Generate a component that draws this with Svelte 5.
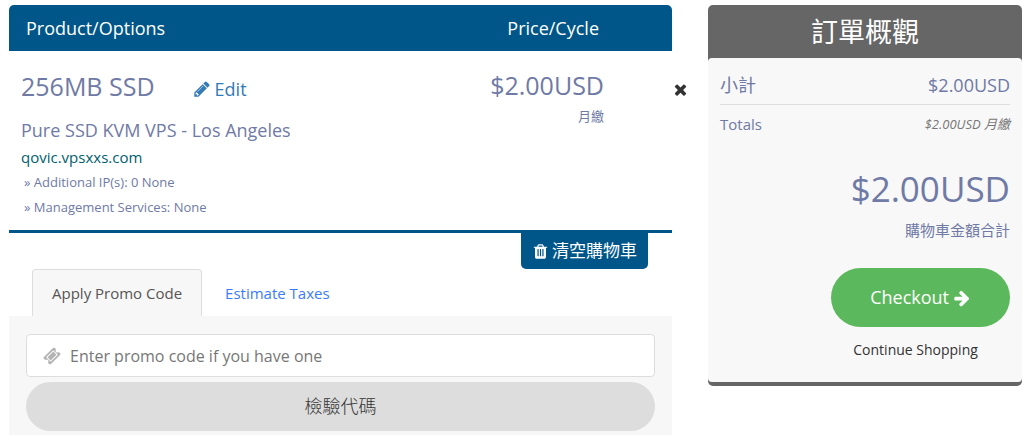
<script>
  const icons = {
    pencil: 'M491 1536l91-91-235-235-91 91v107h128v128h107zm523-928q0-22-22-22-10 0-17 7l-542 542q-7 7-7 17 0 22 22 22 10 0 17-7l542-542q7-7 7-17zm-54-192l416 416-832 832h-416v-416zm683 96q0 53-37 90l-166 166-416-416 166-165q36-38 90-38 53 0 91 38l235 234q37 39 37 91z',
    times: 'M1490 1322q0 40-28 68l-136 136q-28 28-68 28t-68-28l-294-294-294 294q-28 28-68 28t-68-28l-136-136q-28-28-28-68t28-68l294-294-294-294q-28-28-28-68t28-68l136-136q28-28 68-28t68 28l294 294 294-294q28-28 68-28t68 28l136 136q28 28 28 68t-28 68l-294 294 294 294q28 28 28 68z',
    trash: 'M704 1376v-704q0-14-9-23t-23-9h-64q-14 0-23 9t-9 23v704q0 14 9 23t23 9h64q14 0 23-9t9-23zm256 0v-704q0-14-9-23t-23-9h-64q-14 0-23 9t-9 23v704q0 14 9 23t23 9h64q14 0 23-9t9-23zm256 0v-704q0-14-9-23t-23-9h-64q-14 0-23 9t-9 23v704q0 14 9 23t23 9h64q14 0 23-9t9-23zm-544-992h448l-48-117q-7-9-17-11h-317q-10 2-17 11zm928 32v64q0 14-9 23t-23 9h-96v948q0 83-47 143.500t-113 60.500h-832q-66 0-113-58.500t-47-141.500v-952h-96q-14 0-23-9t-9-23v-64q0-14 9-23t23-9h309l70-167q15-37 54-63t79-26h320q40 0 79 26t54 63l70 167h309q14 0 23 9t9 23z',
    arrow: 'M1600 960q0 54-37 91l-651 651q-39 37-91 37-51 0-90-37l-75-75q-38-38-38-91t38-91l293-293h-704q-52 0-84.500-37.500t-32.500-90.500v-128q0-53 32.500-90.500t84.500-37.500h704l-293-294q-38-36-38-90t38-90l75-75q38-38 90-38 53 0 91 38l651 651q37 35 37 90z',
    ticket: 'M1024 452l316 316-572 572-316-316zm-211 979l618-618q19-19 19-45t-19-45l-362-362q-18-18-45-18t-45 18l-618 618q-19 19-19 45t19 45l362 362q18 18 45 18t45-18zm889-637l-907 908q-37 37-90.500 37t-90.500-37l-126-126q56-56 56-136t-56-136-136-56-136 56l-125-126q-37-37-37-90.500t37-90.500l907-906q37-37 90.500-37t90.500 37l125 125q-56 56-56 136t56 136 136 56 136-56l126 125q37 37 37 90.500t-37 90.500z'
  };
  let promo = $state('');
</script>

{#snippet icon(name)}
  <svg class="icon" viewBox="0 0 1792 1792" aria-hidden="true"><path d={icons[name]} /></svg>
{/snippet}

<div class="page">
  <main class="cart">
    <div class="head">
      <span>Product/Options</span>
      <span class="head-price">Price/Cycle</span>
    </div>
    <section class="item">
      <div class="product">
        <div class="title">
          <h2>256MB SSD</h2>
          <a class="edit" href="#edit">{@render icon('pencil')}Edit</a>
        </div>
        <p class="group">Pure SSD KVM VPS - Los Angeles</p>
        <p class="domain">qovic.vpsxxs.com</p>
        <p class="option">» Additional IP(s): 0 None</p>
        <p class="option">» Management Services: None</p>
      </div>
      <div class="price">
        <span class="amount">$2.00USD</span>
        <span class="cycle">月繳</span>
      </div>
    </section>
    <div class="empty-row">
      <button class="empty" type="button">{@render icon('trash')}清空購物車</button>
    </div>
    <div class="tabs" role="tablist">
      <button class="tab active" type="button" role="tab" aria-selected="true">Apply Promo Code</button>
      <button class="tab" type="button" role="tab" aria-selected="false">Estimate Taxes</button>
    </div>
    <form class="promo">
      <label class="field">
        {@render icon('ticket')}
        <input type="text" placeholder="Enter promo code if you have one" bind:value={promo} />
      </label>
      <button class="validate" type="button">檢驗代碼</button>
    </form>
  </main>

  <button class="remove" type="button" aria-label="✖">{@render icon('times')}</button>

  <aside class="summary">
    <h1>訂單概觀</h1>
    <div class="body">
      <div class="line subtotal"><span>小計</span><span>$2.00USD</span></div>
      <div class="line totals"><span>Totals</span><em>$2.00USD 月繳</em></div>
      <div class="due">$2.00USD</div>
      <div class="due-label">購物車金額合計</div>
      <div class="actions">
        <button class="checkout" type="button">Checkout{@render icon('arrow')}</button>
        <a class="continue" href="#shop">Continue Shopping</a>
      </div>
    </div>
  </aside>
</div>

<style>
  :global(body) { background: #fff; }
  .page, .page * { box-sizing: border-box; }
  .page {
    display: grid;
    grid-template-columns: minmax(0, 663fr) 36px minmax(0, 314fr);
    align-items: start;
    padding: 5px 2px 0 9px;
    font-family: "Open Sans", "Noto Sans CJK TC", sans-serif;
    font-size: 16px;
    color: #6f7aa6;
  }
  h1, h2, p { margin: 0; font-weight: 400; }
  button { font-family: inherit; border: 0; cursor: pointer; padding: 0; }
  a { text-decoration: none; }
  .icon { width: 1em; height: 1em; fill: currentColor; flex: none; }

  .head {
    display: flex;
    justify-content: space-between;
    padding: 0 73px 0 17px;
    line-height: 46px;
    font-size: 18px;
    color: #fff;
    background: #005689;
    border-radius: 5px 5px 0 0;
  }
  .item {
    display: flex;
    justify-content: space-between;
    padding: 16px 68px 10px 12px;
    border-bottom: 3px solid #005689;
  }
  .title { display: flex; align-items: center; gap: 38px; }
  h2, .amount { font-size: 25px; line-height: 36px; }
  .edit {
    display: flex;
    align-items: center;
    gap: 4px;
    padding-top: 6px;
    font-size: 18px;
    line-height: 32px;
    color: #337ab7;
  }
  .group { padding-top: 11px; font-size: 18px; line-height: 28px; }
  .domain { font-size: 15px; line-height: 26px; color: #006071; }
  .option { padding-left: 3px; font-size: 13px; line-height: 25px; }
  .price { display: flex; flex-direction: column; align-items: flex-end; }
  .cycle { font-size: 13px; line-height: 26px; }

  .empty-row { display: flex; justify-content: flex-end; padding-right: 24px; }
  .empty {
    display: flex;
    align-items: center;
    gap: 3px;
    padding: 0 11px;
    font-size: 17px;
    line-height: 36px;
    color: #fff;
    background: #005689;
    border-radius: 0 0 5px 5px;
  }
  .tabs { display: flex; gap: 3px; padding-left: 23px; }
  .tab {
    padding: 0 19px;
    font-size: 15px;
    line-height: 46px;
    color: #3b7bff;
    background: none;
    border: 1px solid transparent;
    border-bottom: 0;
    border-radius: 4px 4px 0 0;
  }
  .tab.active { color: #555; background: #f7f7f7; border-color: #ddd; }
  .promo {
    display: flex;
    flex-direction: column;
    gap: 5px;
    padding: 18px 17px 4px;
    background: #f7f7f7;
  }
  .field {
    display: flex;
    align-items: center;
    gap: 9px;
    height: 43px;
    padding: 0 16px;
    font-size: 18px;
    color: #b4b4b4;
    background: #fff;
    border: 1px solid #ddd;
    border-radius: 4px;
  }
  .field input {
    flex: 1;
    min-width: 0;
    padding: 0;
    border: 0;
    outline: 0;
    font: inherit;
    font-size: 16px;
    color: #555;
    background: none;
  }
  .field input::placeholder { color: #777; opacity: 1; }
  .validate {
    font-size: 18px;
    font-weight: 300;
    line-height: 49px;
    color: #333;
    background: #ddd;
    border-radius: 25px;
  }

  .remove {
    justify-self: start;
    display: flex;
    margin-top: 76px;
    font-size: 17px;
    color: #333;
    background: none;
  }

  .summary {
    background: #666;
    border-radius: 5px;
    padding-bottom: 4px;
  }
  h1 {
    font-size: 27px;
    line-height: 53px;
    text-align: center;
    color: #fff;
  }
  .body {
    padding: 8px 12px 18px;
    background: #f8f8f8;
    border-radius: 4px;
  }
  .line { display: flex; justify-content: space-between; align-items: center; line-height: 38px; }
  .subtotal { font-size: 18px; border-bottom: 1px solid #ddd; }
  .totals { font-size: 15px; }
  em { font-size: 13px; color: #777; }
  .due { padding-top: 23px; font-size: 35px; line-height: 46px; text-align: right; }
  .due-label { font-size: 15px; line-height: 36px; text-align: right; }
  .actions {
    display: flex;
    flex-direction: column;
    align-items: center;
    width: fit-content;
    margin-left: auto;
    padding-top: 20px;
  }
  .checkout {
    display: flex;
    align-items: center;
    gap: 4px;
    padding: 0 39px;
    font-size: 18px;
    line-height: 59px;
    color: #fff;
    background: #5cb85c;
    border-radius: 30px;
  }
  .continue { padding: 9px 10px 0 0; font-size: 14px; line-height: 28px; color: #333; }
</style>
